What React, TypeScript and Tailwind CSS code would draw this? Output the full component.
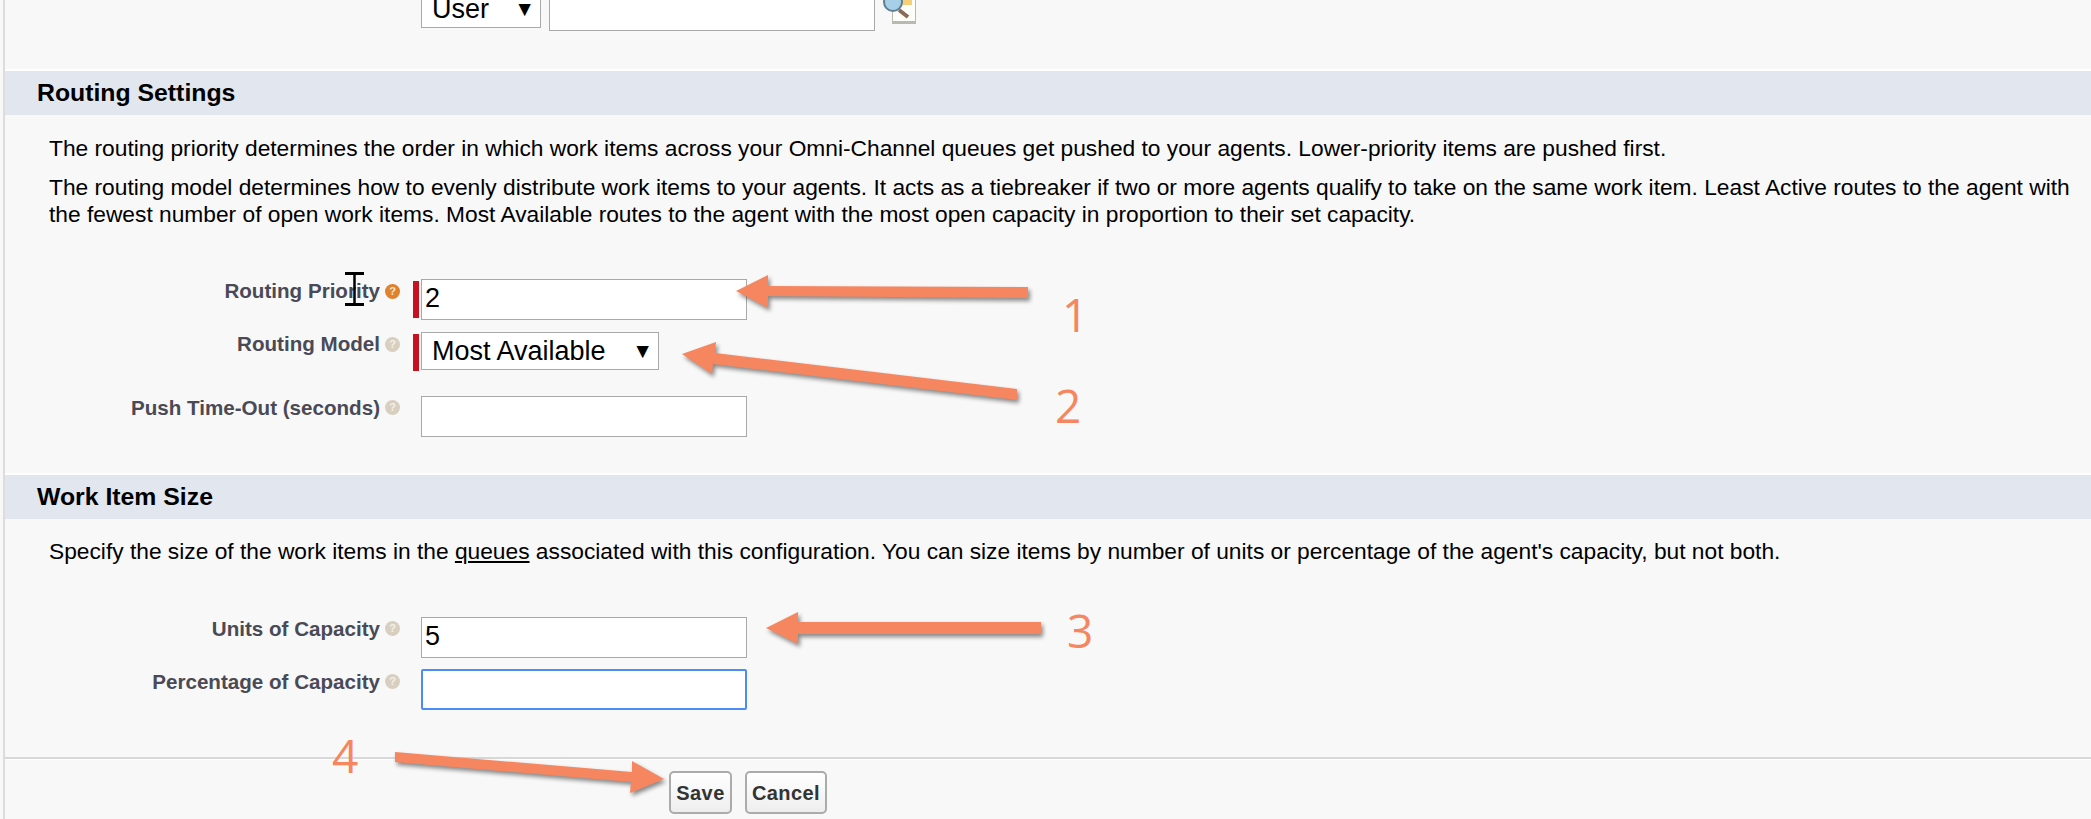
function Help({ active }: { active?: boolean }) {
  return (
    <span
      className={
        "ml-[5px] flex h-[15px] w-[15px] shrink-0 items-center justify-center rounded-full text-[11px] font-bold leading-none " +
        (active ? "bg-[#e0812c] text-[#fbe6d2]" : "bg-[#d8cfc0] text-[#f4f0e8]")
      }
    >
      ?
    </span>
  )
}

function Label({ text, active }: { text: string; active?: boolean }) {
  return (
    <div className="flex w-[395px] shrink-0 items-center justify-end">
      <span className="text-[20.6px] font-bold leading-5 text-[#4a4a56]">{text}</span>
      <Help active={active} />
    </div>
  )
}

function Required({ on }: { on?: boolean }) {
  return <div className={"mr-[2px] ml-[13px] mt-[2px] h-[37px] w-[6px] shrink-0 " + (on ? "bg-[#c8101e]" : "")} />
}

function TextBox({ value, focus }: { value?: string; focus?: boolean }) {
  return (
    <div
      className={
        "flex h-[41px] w-[326px] items-center bg-white px-[3px] pb-[2px] text-[27px] text-black " +
        (focus ? "rounded-[2px] border-2 border-[#4d8cf5]" : "border border-[#a9a9a9]")
      }
    >
      {value}
    </div>
  )
}

function FakeSelect({ value, width }: { value: string; width: string }) {
  return (
    <div className={"flex h-[38px] items-center justify-between border border-[#a9a9a9] bg-white pl-[10px] pr-[5px] text-[27px] text-black " + width}>
      <span>{value}</span>
      <span className="text-[21px]">▼</span>
    </div>
  )
}

function SectionHeader({ title }: { title: string }) {
  return (
    <div className="flex h-[46px] items-center border-t-2 border-white bg-[#e1e6ef] pl-[32px] text-[24.8px] font-bold text-black">
      {title}
    </div>
  )
}

function Annotations() {
  return (
    <>
      <svg className="pointer-events-none absolute left-0 top-0 drop-shadow-[2px_3px_2px_rgba(0,0,0,0.45)]" width="2091" height="819">
        <polygon fill="#f68660" points="736,291 768,275 768,286 1028,287 1028,298 768,296 768,308" />
        <polygon fill="#f68660" points="682,354 716,342 715,353 1017,389 1017,400 713,364 712,374" />
        <polygon fill="#f68660" points="766,628 798,612 798,622 1041,622 1041,634 798,634 798,644" />
        <polygon fill="#f68660" points="664,779 632,761 632,772 395,752 395,762 631,782 630,793" />
      </svg>
      <span className="absolute left-[1062px] top-[288px] font-['Open_Sans'] text-[46px] leading-[52px] text-[#f68660]">1</span>
      <span className="absolute left-[1055px] top-[379px] font-['Open_Sans'] text-[46px] leading-[52px] text-[#f68660]">2</span>
      <span className="absolute left-[1067px] top-[604px] font-['Open_Sans'] text-[46px] leading-[52px] text-[#f68660]">3</span>
      <span className="absolute left-[332px] top-[729px] font-['Open_Sans'] text-[46px] leading-[52px] text-[#f68660]">4</span>
      {/* text cursor over the label */}
      <svg className="pointer-events-none absolute left-[345px] top-[271px]" width="19" height="36" fill="none" stroke="#000">
        <path strokeWidth="3" d="M0 2.5h19M0 33.5h19" />
        <path strokeWidth="2.5" d="M9.5 2v32" />
      </svg>
    </>
  )
}

export default function App() {
  return (
    <div className="relative h-[819px] w-[2091px] overflow-hidden bg-[#f8f8f8] pl-[5px] font-['Liberation_Sans',Arial,sans-serif]">
      <div className="absolute bottom-0 left-[3px] top-0 w-[2px] bg-[#dcdcdc]" />
      <div className="flex h-[69px] items-start pl-[416px]">
        <div className="-mt-[10px] flex items-start gap-[8px]">
          <FakeSelect value="User" width="w-[120px]" />
          <div className="h-[41px] w-[326px] border border-[#a9a9a9] bg-white" />
          <svg width="33" height="27" viewBox="0 0 33 27" className="mt-[10px]">
            <rect x="9" y="0" width="25" height="24" fill="#b9b9b0" />
            <rect x="10" y="0" width="22" height="21" fill="#fdfdfa" />
            <rect x="19" y="0" width="10" height="5" fill="#f8cf79" />
            <circle cx="10" cy="2" r="9" fill="#a7cfe8" stroke="#5f7f95" strokeWidth="2" />
            <path d="M16 10l9 7" stroke="#8a6a58" strokeWidth="4" />
          </svg>
        </div>
      </div>

      <SectionHeader title="Routing Settings" />
      <div className="pl-[44px] pr-[20px] pt-[20px] text-[22.75px] leading-[27px] text-black">
        <p className="mb-[12px]">
          The routing priority determines the order in which work items across your Omni-Channel queues get pushed to your agents. Lower-priority items are pushed first.
        </p>
        <p>
          The routing model determines how to evenly distribute work items to your agents. It acts as a tiebreaker if two or more agents qualify to take on the same work item. Least Active routes to the agent with the fewest number of open work items. Most Available routes to the agent with the most open capacity in proportion to their set capacity.
        </p>
      </div>

      <div className="mt-[51px] flex h-[41px] items-start">
        <div className="flex h-[24px] items-center"><Label text="Routing Priority" active /></div>
        <Required on />
        <TextBox value="2" />
      </div>
      <div className="mt-[12px] flex h-[38px] items-start">
        <div className="flex h-[24px] items-center"><Label text="Routing Model" /></div>
        <Required on />
        <FakeSelect value="Most Available" width="w-[238px]" />
      </div>
      <div className="mt-[26px] flex h-[41px] items-start">
        <div className="flex h-[23px] items-center"><Label text="Push Time-Out (seconds)" /></div>
        <Required />
        <TextBox />
      </div>

      <div className="mt-[36px]"><SectionHeader title="Work Item Size" /></div>
      <div className="pl-[44px] pt-[19px] text-[22.75px] leading-[27px] text-black">
        <p>
          Specify the size of the work items in the <span className="underline">queues</span> associated with this configuration. You can size items by number of units or percentage of the agent's capacity, but not both.
        </p>
      </div>

      <div className="mt-[52px] flex h-[41px] items-start">
        <div className="flex h-[23px] items-center"><Label text="Units of Capacity" /></div>
        <Required />
        <TextBox value="5" />
      </div>
      <div className="mt-[11px] flex h-[42px] items-start">
        <div className="flex h-[25px] items-center"><Label text="Percentage of Capacity" /></div>
        <Required />
        <TextBox focus />
      </div>

      <div className="mt-[46px] border-t-2 border-[#d8d8d8]">
        <div className="flex gap-[13px] border-t border-white pl-[664px] pt-[11px]">
          <button className="h-[43px] w-[63px] rounded-[5px] border-2 border-[#ababab] bg-gradient-to-b from-white to-[#eeeeee] text-[20px] font-bold tracking-[0.4px] text-[#333]">Save</button>
          <button className="h-[43px] w-[82px] rounded-[5px] border-2 border-[#ababab] bg-gradient-to-b from-white to-[#eeeeee] text-[20px] font-bold tracking-[0.4px] text-[#333]">Cancel</button>
        </div>
      </div>

      <Annotations />
    </div>
  )
}
